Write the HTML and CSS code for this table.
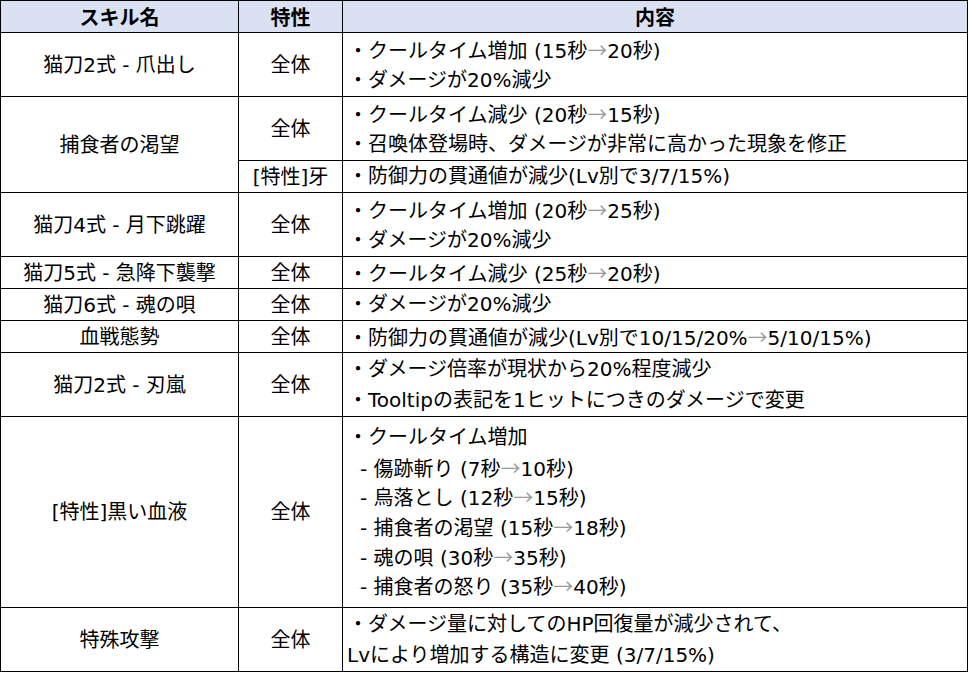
FILE: index.html
```html
<!DOCTYPE html>
<html lang="ja">
<head>
<meta charset="utf-8">
<link rel="stylesheet" href="styles.css">
</head>
<body>
<table class="patch">
  <colgroup>
    <col class="c-name">
    <col class="c-type">
    <col class="c-desc">
  </colgroup>
  <thead>
    <tr class="h1">
      <th>スキル名</th>
      <th>特性</th>
      <th>内容</th>
    </tr>
  </thead>
  <tbody>
    <tr class="h2">
      <td class="name">猫刀2式 - 爪出し</td>
      <td class="type">全体</td>
      <td class="desc"><div>・クールタイム増加 (15秒<span class="arr">→</span>20秒)</div><div>・ダメージが20%減少</div></td>
    </tr>
    <tr class="h2">
      <td class="name" rowspan="2">捕食者の渇望</td>
      <td class="type">全体</td>
      <td class="desc"><div>・クールタイム減少 (20秒<span class="arr">→</span>15秒)</div><div>・召喚体登場時、ダメージが非常に高かった現象を修正</div></td>
    </tr>
    <tr class="h1">
      <td class="type">[特性]牙</td>
      <td class="desc"><div>・防御力の貫通値が減少(Lv別で3/7/15%)</div></td>
    </tr>
    <tr class="h2">
      <td class="name">猫刀4式 - 月下跳躍</td>
      <td class="type">全体</td>
      <td class="desc"><div>・クールタイム増加 (20秒<span class="arr">→</span>25秒)</div><div>・ダメージが20%減少</div></td>
    </tr>
    <tr class="h1">
      <td class="name">猫刀5式 - 急降下襲撃</td>
      <td class="type">全体</td>
      <td class="desc"><div>・クールタイム減少 (25秒<span class="arr">→</span>20秒)</div></td>
    </tr>
    <tr class="h1">
      <td class="name">猫刀6式 - 魂の唄</td>
      <td class="type">全体</td>
      <td class="desc"><div>・ダメージが20%減少</div></td>
    </tr>
    <tr class="h1">
      <td class="name">血戦態勢</td>
      <td class="type">全体</td>
      <td class="desc"><div>・防御力の貫通値が減少(Lv別で10/15/20%<span class="arr">→</span>5/10/15%)</div></td>
    </tr>
    <tr class="h2">
      <td class="name">猫刀2式 - 刃嵐</td>
      <td class="type">全体</td>
      <td class="desc"><div>・ダメージ倍率が現状から20%程度減少</div><div>・Tooltipの表記を1ヒットにつきのダメージで変更</div></td>
    </tr>
    <tr class="h6">
      <td class="name">[特性]黒い血液</td>
      <td class="type">全体</td>
      <td class="desc list"><div>・クールタイム増加</div><div class="sub">- 傷跡斬り (7秒<span class="arr">→</span>10秒)</div><div class="sub">- 烏落とし (12秒<span class="arr">→</span>15秒)</div><div class="sub">- 捕食者の渇望 (15秒<span class="arr">→</span>18秒)</div><div class="sub">- 魂の唄 (30秒<span class="arr">→</span>35秒)</div><div class="sub">- 捕食者の怒り (35秒<span class="arr">→</span>40秒)</div></td>
    </tr>
    <tr class="h2">
      <td class="name">特殊攻撃</td>
      <td class="type">全体</td>
      <td class="desc"><div>・ダメージ量に対してのHP回復量が減少されて、</div><div class="flush">Lvにより増加する構造に変更 (3/7/15%)</div></td>
    </tr>
  </tbody>
</table>
</body>
</html>
```

FILE: styles.css
```css
html, body {
  margin: 0;
  padding: 0;
  background: #ffffff;
}

body {
  font-family: "DejaVu Sans", "Noto Sans CJK JP", sans-serif;
  font-size: 20px;
  color: #000000;
}

.patch {
  border-collapse: collapse;
  table-layout: fixed;
  width: 967px;
}

.c-name { width: 238px; }
.c-type { width: 104px; }
.c-desc { width: 625px; }

.patch th,
.patch td {
  border: 1px solid #000000;
  padding: 0;
  line-height: 24px;
  vertical-align: middle;
  white-space: nowrap;
  overflow: hidden;
}

.patch th {
  font-family: "Noto Sans CJK JP", sans-serif;
  background: #d9e1f2;
  font-weight: bold;
  text-align: center;
}

.h1 { height: 32px; }
.h2 { height: 64px; }
.h6 { height: 191px; }

.name,
.type {
  text-align: center;
}

.desc {
  text-align: left;
  padding-left: 5px !important;
}

.desc div {
  height: 31px;
  line-height: 31px;
}

.desc.list div {
  height: 29.6px;
  line-height: 29.6px;
}

.sub {
  padding-left: 12px;
}

.flush {
  margin-left: -1px;
}

.arr {
  font-family: "Noto Sans CJK JP", sans-serif;
  color: #9a9a9a;
}
```
